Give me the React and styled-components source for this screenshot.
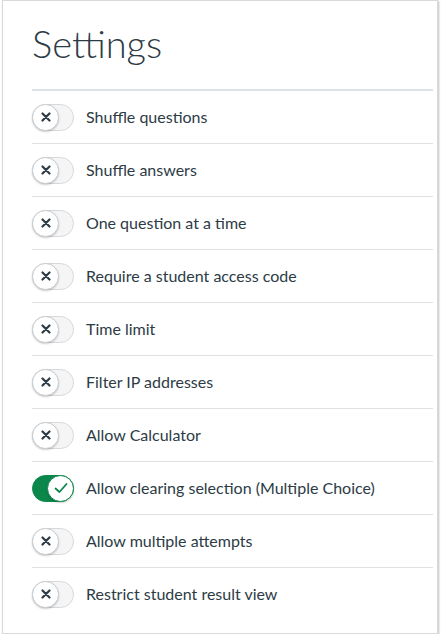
import React from "react";
import styled, { createGlobalStyle } from "styled-components";

const Global = createGlobalStyle`
  html, body { margin: 0; padding: 0; background: #fff; }
  body { font-family: Lato, "Liberation Sans", sans-serif; color: #2d3b45; }
`;

const Panel = styled.div`
  box-sizing: border-box;
  margin-left: 2px;
  width: 436px;
  height: 634px;
  border: 1px solid #d7dadd;
  box-shadow: 1px 1px 2px rgba(0, 0, 0, 0.25);
  padding: 20px 4px 0 29px;
`;

const Title = styled.h1`
  margin: 0 0 24px;
  font-size: 38px;
  line-height: 44px;
  font-weight: 300;
  color: #2d3b45;
`;

const List = styled.div`
  border-top: 2px solid #dfe2e5;
`;

const Row = styled.div`
  display: flex;
  align-items: center;
  gap: 12px;
  height: 52px;
  border-bottom: 1px solid #dfe2e5;
  &:last-child { border-bottom: none; }
`;

const Track = styled.span`
  position: relative;
  box-sizing: border-box;
  width: 42px;
  height: 27px;
  border-radius: 14px;
  border: 1px solid ${(p) => (p.on ? "#0b874b" : "#d5d9dc")};
  background: ${(p) => (p.on ? "#0b874b" : "#f5f5f5")};
  flex: none;
`;

const Knob = styled.span`
  position: absolute;
  top: -1px;
  ${(p) => (p.on ? "right: -1px;" : "left: -1px;")}
  box-sizing: border-box;
  width: 27px;
  height: 27px;
  border-radius: 50%;
  background: #fff;
  border: 1px solid ${(p) => (p.on ? "#0b874b" : "#c7cdd1")};
  box-shadow: 0 1px 2px rgba(0, 0, 0, 0.2);
  display: flex;
  align-items: center;
  justify-content: center;
`;

const Label = styled.span`
  font-size: 16px;
  color: #2d3b45;
  margin-top: -1px;
`;

const XIcon = () => (
  <svg width="10" height="10" viewBox="0 0 10 10">
    <path d="M1.5 1.5 L8.5 8.5 M8.5 1.5 L1.5 8.5" stroke="#2d3b45" strokeWidth="2.2" strokeLinecap="round" />
  </svg>
);

const CheckIcon = () => (
  <svg width="14" height="12" viewBox="0 0 14 12">
    <path d="M1.5 6.5 L5.5 10 L12.5 2" stroke="#0b874b" strokeWidth="1.8" fill="none" strokeLinecap="round" strokeLinejoin="round" />
  </svg>
);

const Toggle = ({ on }) => (
  <Track on={on ? 1 : 0}>
    <Knob on={on ? 1 : 0}>{on ? <CheckIcon /> : <XIcon />}</Knob>
  </Track>
);

const settings = [
  ["Shuffle questions", false],
  ["Shuffle answers", false],
  ["One question at a time", false],
  ["Require a student access code", false],
  ["Time limit", false],
  ["Filter IP addresses", false],
  ["Allow Calculator", false],
  ["Allow clearing selection (Multiple Choice)", true],
  ["Allow multiple attempts", false],
  ["Restrict student result view", false],
];

export default function App() {
  return (
    <>
      <Global />
      <Panel>
        <Title>Settings</Title>
        <List>
          {settings.map(([label, on]) => (
            <Row key={label}>
              <Toggle on={on} />
              <Label>{label}</Label>
            </Row>
          ))}
        </List>
      </Panel>
    </>
  );
}
